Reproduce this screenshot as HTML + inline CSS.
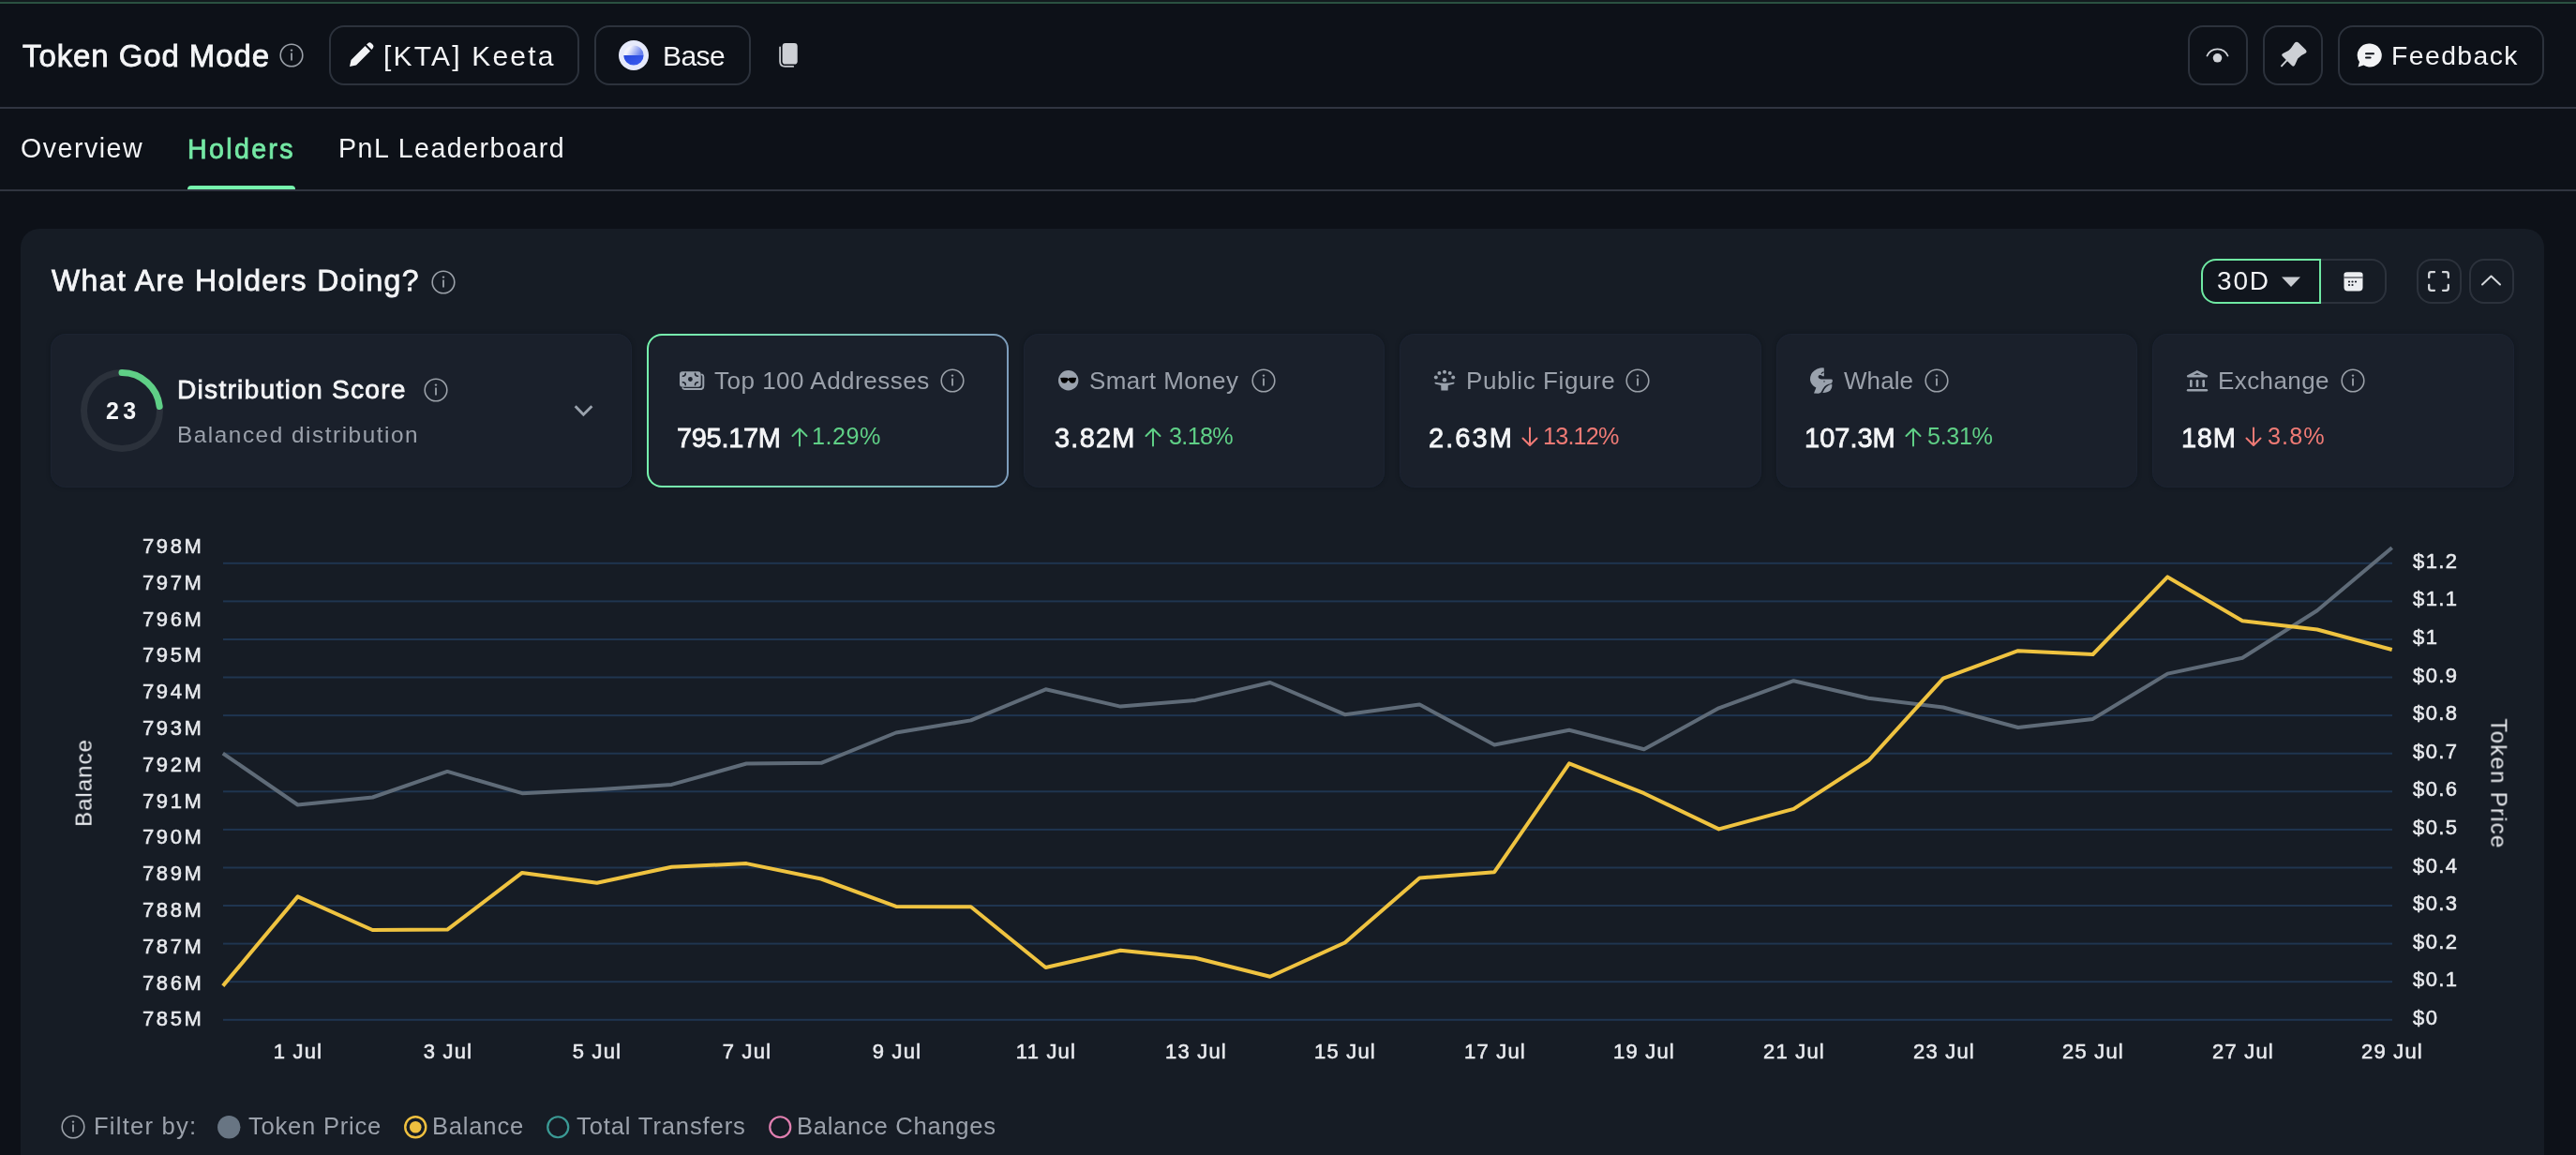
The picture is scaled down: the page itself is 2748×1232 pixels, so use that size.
<!DOCTYPE html>
<html><head><meta charset="utf-8">
<style>
*{margin:0;padding:0;box-sizing:border-box}
html,body{width:2748px;height:1232px;overflow:hidden;background:#0d1118;font-family:"Liberation Sans",sans-serif}
.a{position:absolute}
.tx{position:absolute;white-space:nowrap;will-change:transform;line-height:1.117;font-family:"Liberation Sans",sans-serif}
.btn{position:absolute;border:2px solid #2c323c;border-radius:16px}
.card{position:absolute;top:356px;height:164px;background:#1a202b;border-radius:16px;box-shadow:inset 0 0 0 1px #1c2331,0 0 5px 0 rgba(8,12,18,0.3)}
svg{position:absolute;overflow:visible}
</style></head><body>
<!-- top strip -->
<div class="a" style="left:0;top:0;width:2748px;height:2px;background:#131c1f"></div>
<div class="a" style="left:0;top:2px;width:2748px;height:2px;background:#2a5141"></div>
<!-- header -->
<div class="a" style="left:0;top:114px;width:2748px;height:2px;background:#303540"></div>
<div class="a" style="left:0;top:202px;width:2748px;height:2px;background:#303540"></div>
<div class="a" style="left:200px;top:198px;width:115px;height:4px;background:#76f5ad;border-radius:4px 4px 0 0"></div>
<!-- info icon header -->
<svg style="left:298px;top:46px" width="26" height="26" viewBox="0 0 26 26"><circle cx="13" cy="13" r="11.8" fill="none" stroke="#9aa0a8" stroke-width="1.6"/><rect x="12.1" y="10.5" width="1.8" height="8" fill="#9aa0a8"/><circle cx="13" cy="7.6" r="1.2" fill="#9aa0a8"/></svg>
<div class="btn" style="left:351px;top:27px;width:267px;height:64px"></div>
<!-- pencil -->
<svg style="left:372px;top:45px" width="27" height="27" viewBox="0 0 27 27"><path d="M1 26 L2.5 19 L17.5 4 L23 9.5 L8 24.5 Z M19 2.5 L21 0.8 Q22.5 -0.2 24 1 L26 3 Q27 4.5 26 6 L24.5 8 Z" fill="#f2f3f5"/></svg>
<div class="btn" style="left:634px;top:27px;width:167px;height:64px"></div>
<!-- base logo -->
<svg style="left:660px;top:43px" width="32" height="32" viewBox="0 0 32 32"><defs><linearGradient id="bgq" x1="0" y1="0" x2="1" y2="0.3"><stop offset="0.35" stop-color="#f1f2fb"/><stop offset="1" stop-color="#6a83ee"/></linearGradient><linearGradient id="bgb" x1="0" y1="0" x2="1" y2="1"><stop offset="0" stop-color="#2748da"/><stop offset="1" stop-color="#3d5ef2"/></linearGradient></defs><circle cx="16" cy="16" r="16" fill="#e6eafb"/><path d="M5.4 16 A10.6 10.6 0 0 1 26.6 16 Z" fill="url(#bgq)"/><path d="M5.4 16 A10.6 10.6 0 0 0 26.6 16 Z" fill="url(#bgb)"/></svg>
<!-- copy icon -->
<svg style="left:825px;top:40px" width="35" height="38" viewBox="0 0 35 38"><rect x="9.6" y="6" width="16.1" height="22.6" rx="3.4" fill="#cdd0d5"/><path d="M7.1 10.3 V25.6 Q7.1 30.9 12.4 30.9 H21.2" fill="none" stroke="#c3c6cb" stroke-width="1.8" stroke-linecap="round"/></svg>
<!-- right header buttons -->
<div class="btn" style="left:2334px;top:27px;width:64px;height:64px"></div>
<svg style="left:2353.4px;top:50px" width="25" height="18" viewBox="0 0 25 18"><path d="M1.5 9.5 A12 12 0 0 1 23.5 9.5" fill="none" stroke="#d0d3d8" stroke-width="1.8" stroke-linecap="round"/><circle cx="12.5" cy="11.8" r="4.8" fill="#d0d3d8"/></svg>
<div class="btn" style="left:2414px;top:27px;width:64px;height:64px"></div>
<svg style="left:2425px;top:38px" width="45" height="42" viewBox="0 0 45 42"><path d="M22.5 8.2 Q24.8 5.6 27.2 7.8 L34.6 15 Q36.8 17.4 34 19 Q28.6 21.2 26.2 24.6 L23.3 31 Q21.9 33.9 19.7 31.8 L10.1 22.2 Q7.9 20 10.9 18.7 Q17.2 16.4 19.6 12.6 Z" fill="#cdd0d5"/><path d="M14.8 26.2 L9 32.4" stroke="#cdd0d5" stroke-width="1.9" stroke-linecap="round"/></svg>
<div class="btn" style="left:2494px;top:27px;width:220px;height:64px"></div>
<svg style="left:2515px;top:46px" width="27" height="27" viewBox="0 0 27 27"><path d="M13.5 0.5 A12.5 12.5 0 1 1 6.5 23.5 L0.5 25.5 L2 20 A12.5 12.5 0 0 1 13.5 0.5 Z" fill="#f2f3f5"/><rect x="8" y="10.2" width="10" height="2" rx="1" fill="#0d1118"/><rect x="8" y="14.6" width="6.6" height="2" rx="1" fill="#0d1118"/></svg>

<!-- panel -->
<div class="a" style="left:22px;top:244px;width:2692px;height:1100px;background:#161c25;border-radius:20px"></div>
<svg style="left:460px;top:287.5px" width="26" height="26" viewBox="0 0 26 26"><circle cx="13" cy="13" r="11.8" fill="none" stroke="#9aa0a8" stroke-width="1.6"/><rect x="12.1" y="10.5" width="1.8" height="8" fill="#9aa0a8"/><circle cx="13" cy="7.6" r="1.2" fill="#9aa0a8"/></svg>
<!-- controls -->
<div class="a" style="left:2476px;top:276px;width:70px;height:48px;border:2px solid #2c323c;border-left:none;border-radius:0 16px 16px 0"></div>
<div class="a" style="left:2348px;top:276px;width:128px;height:48px;border:2px solid #6fe9a3;border-radius:16px 0 0 16px;background:#11161e"></div>
<svg style="left:2434px;top:295px" width="20" height="12" viewBox="0 0 20 12"><path d="M0 0.5 L20 0.5 L10 11 Z" fill="#c9ccd1"/></svg>
<svg style="left:2500px;top:290px" width="21" height="21" viewBox="0 0 21 21"><rect x="0.5" y="0.5" width="20" height="20" rx="4" fill="#eceef1"/><rect x="0.5" y="0.5" width="20" height="4.5" rx="2" fill="#eceef1"/><path d="M0.5 6 H20.5" stroke="#161b24" stroke-width="1"/><circle cx="6" cy="10.5" r="1.1" fill="#161b24"/><circle cx="9.5" cy="10.5" r="1.1" fill="#161b24"/><circle cx="13" cy="10.5" r="1.1" fill="#161b24"/><circle cx="6" cy="14" r="1.1" fill="#161b24"/><circle cx="9.5" cy="14" r="1.1" fill="#161b24"/></svg>
<div class="btn" style="left:2578px;top:276px;width:48px;height:48px"></div>
<svg style="left:2590px;top:289px" width="23" height="22" viewBox="0 0 23 22"><path d="M1.2 7 V3.5 Q1.2 1.2 3.5 1.2 H7 M16 1.2 H19.5 Q21.8 1.2 21.8 3.5 V7 M21.8 15 V18.5 Q21.8 20.8 19.5 20.8 H16 M7 20.8 H3.5 Q1.2 20.8 1.2 18.5 V15" fill="none" stroke="#d5d8dc" stroke-width="2.3" stroke-linecap="round"/></svg>
<div class="btn" style="left:2634px;top:276px;width:48px;height:48px"></div>
<svg style="left:2647px;top:293px" width="21" height="12" viewBox="0 0 21 12"><path d="M1 10.5 L10.5 1.5 L20 10.5" fill="none" stroke="#d5d8dc" stroke-width="2" stroke-linecap="round" stroke-linejoin="round"/></svg>

<!-- cards -->
<div class="card" style="left:54px;width:620px"></div>
<svg style="left:86px;top:394px" width="88" height="88" viewBox="0 0 88 88"><circle cx="44" cy="44" r="40.5" fill="none" stroke="#2b313b" stroke-width="7"/><path d="M44 3.5 A40.5 40.5 0 0 1 84.2 39.5" fill="none" stroke="#5fcf86" stroke-width="7" stroke-linecap="round"/></svg>
<svg style="left:452px;top:403px" width="26" height="26" viewBox="0 0 26 26"><circle cx="13" cy="13" r="11.8" fill="none" stroke="#9aa0a8" stroke-width="1.6"/><rect x="12.1" y="10.5" width="1.8" height="8" fill="#9aa0a8"/><circle cx="13" cy="7.6" r="1.2" fill="#9aa0a8"/></svg>
<svg style="left:611.5px;top:432px" width="21" height="14" viewBox="0 0 21 14"><path d="M1.7 1.3 L10.4 10.2 L19.4 1.3" fill="none" stroke="#9aa2ad" stroke-width="2.9" stroke-linecap="butt" stroke-linejoin="miter"/></svg>

<div class="card" style="left:690px;width:386px;box-shadow:none;background:linear-gradient(90deg,#76f5ad,#7d9cbb);"></div>
<div class="card" style="left:692px;top:358px;width:382px;height:160px;background:#1a202b;border-radius:14px;box-shadow:none"></div>
<div class="card" style="left:1092px;width:385px"></div>
<div class="card" style="left:1493px;width:386px"></div>
<div class="card" style="left:1895px;width:385px"></div>
<div class="card" style="left:2296px;width:386px"></div>

<!-- card info icons -->
<svg style="left:1003px;top:393px" width="26" height="26" viewBox="0 0 26 26"><circle cx="13" cy="13" r="11.8" fill="none" stroke="#9aa0a8" stroke-width="1.6"/><rect x="12.1" y="10.5" width="1.8" height="8" fill="#9aa0a8"/><circle cx="13" cy="7.6" r="1.2" fill="#9aa0a8"/></svg>
<svg style="left:1335px;top:393px" width="26" height="26" viewBox="0 0 26 26"><circle cx="13" cy="13" r="11.8" fill="none" stroke="#9aa0a8" stroke-width="1.6"/><rect x="12.1" y="10.5" width="1.8" height="8" fill="#9aa0a8"/><circle cx="13" cy="7.6" r="1.2" fill="#9aa0a8"/></svg>
<svg style="left:1734px;top:393px" width="26" height="26" viewBox="0 0 26 26"><circle cx="13" cy="13" r="11.8" fill="none" stroke="#9aa0a8" stroke-width="1.6"/><rect x="12.1" y="10.5" width="1.8" height="8" fill="#9aa0a8"/><circle cx="13" cy="7.6" r="1.2" fill="#9aa0a8"/></svg>
<svg style="left:2053px;top:393px" width="26" height="26" viewBox="0 0 26 26"><circle cx="13" cy="13" r="11.8" fill="none" stroke="#9aa0a8" stroke-width="1.6"/><rect x="12.1" y="10.5" width="1.8" height="8" fill="#9aa0a8"/><circle cx="13" cy="7.6" r="1.2" fill="#9aa0a8"/></svg>
<svg style="left:2497px;top:393px" width="26" height="26" viewBox="0 0 26 26"><circle cx="13" cy="13" r="11.8" fill="none" stroke="#9aa0a8" stroke-width="1.6"/><rect x="12.1" y="10.5" width="1.8" height="8" fill="#9aa0a8"/><circle cx="13" cy="7.6" r="1.2" fill="#9aa0a8"/></svg>
<!-- money icon -->
<svg style="left:724px;top:395px" width="28" height="22" viewBox="0 0 28 22"><path d="M25 4.6 Q26.3 5.2 26.3 7 V16.4 Q26.3 20.1 22.6 20.1 H6.3 Q5 20.1 4.4 19.1" fill="none" stroke="#9aa2ad" stroke-width="2" stroke-linecap="round"/><rect x="1" y="1.3" width="22.7" height="16.4" rx="3" fill="#9aa2ad"/><circle cx="12.4" cy="9.5" r="2.4" fill="#191f2a"/><path d="M4.3 6.3 Q7.3 6.3 7.3 3.3 M17.5 3.3 Q17.5 6.3 20.5 6.3 M4.3 12.7 Q7.3 12.7 7.3 15.7 M17.5 15.7 Q17.5 12.7 20.5 12.7" fill="none" stroke="#191f2a" stroke-width="1.5" stroke-linecap="round"/></svg>
<!-- sunglasses face -->
<svg style="left:1129px;top:395px" width="22" height="22" viewBox="0 0 22 22"><circle cx="10.7" cy="10.8" r="10.7" fill="#9aa2ad"/><path d="M2.2 8 Q6.2 7.3 9.8 8.1 L10.7 9.3 L11.6 8.1 Q15.2 7.3 19.2 8 L18.4 11.5 Q17.6 13.7 15 13.8 Q12.6 13.8 11.5 11.2 L10.7 10.5 L9.9 11.2 Q8.8 13.8 6.4 13.8 Q3.8 13.7 3 11.5 Z" fill="#000"/></svg>
<!-- public figure -->
<svg style="left:1529px;top:394px" width="24" height="24" viewBox="0 0 24 24"><g fill="#9aa2ad"><circle cx="2.8" cy="8.5" r="2"/><circle cx="6.4" cy="4" r="2"/><circle cx="12" cy="2.8" r="2"/><circle cx="17.7" cy="4" r="2"/><circle cx="21.2" cy="8.5" r="2"/><circle cx="12" cy="11.3" r="2.3"/><path d="M1.5 14.5 Q1.5 13.6 2.5 13.8 Q7 14.8 12 14.8 Q17 14.8 21.5 13.8 Q22.5 13.6 22.5 14.5 Q22.5 15.4 21.2 15.8 L15.8 17 L15.6 22.6 H8.4 L8.2 17 L2.8 15.8 Q1.5 15.4 1.5 14.5 Z"/></g></svg>
<!-- whale -->
<svg style="left:1930px;top:392px" width="26" height="28" viewBox="0 0 26 28"><path d="M11.6 0.4 Q15.2 0 15.8 0.6 L15.9 8.6 Q15.9 9.8 14.6 9.2 L12 8 Q10 7.6 9.6 9.6 Q9.6 12.2 12.6 12.4 L23.6 12.4 Q25.2 12.6 24.9 14.2 Q24.6 16.8 23.2 17.2 Q17.8 17.4 14.8 22.6 L12.6 26.6 Q11.5 27.8 9.5 27.7 L5 27.6 L7.4 21.4 Q1.8 18.6 1 13.2 Q0.6 6.6 5.6 3.2 Q8.4 1.2 11.6 0.4 Z" fill="#9aa2ad"/><path d="M14.3 26.9 Q17.3 19.5 24.2 17.6 Q24.9 21.6 22.5 24.2 Q19.7 27 14.3 26.9 Z" fill="#9aa2ad"/><path d="M12.9 6.7 Q13.8 5.3 15.6 4.9" fill="none" stroke="#191f2a" stroke-width="1.1"/><rect x="15.4" y="14.3" width="1.2" height="1.2" fill="#191f2a"/></svg>
<!-- bank -->
<svg style="left:2332px;top:394px" width="24" height="24" viewBox="0 0 24 24"><g fill="#9aa2ad"><path d="M11.9 1 L23 6.6 Q23.6 8.3 22.2 8.5 H1.8 Q0.4 8.3 1 6.6 Z"/><rect x="4" y="11" width="2.6" height="8" rx="1.2"/><rect x="10.7" y="11" width="2.6" height="8" rx="1.2"/><rect x="17.4" y="11" width="2.6" height="8" rx="1.2"/><rect x="0.8" y="21" width="22.4" height="2.4" rx="1.2"/></g><path d="M8 5.8 L11.9 3.9 L15.8 5.8 Z" fill="#191f2a"/></svg>
<!-- arrows -->
<svg style="left:844px;top:456px" width="18" height="22" viewBox="0 0 18 22"><path d="M9 19.5 V2 M1.5 9 L9 1.5 L16.5 9" fill="none" stroke="#5fcf86" stroke-width="2" stroke-linecap="round" stroke-linejoin="round"/></svg>
<svg style="left:1221px;top:456px" width="18" height="22" viewBox="0 0 18 22"><path d="M9 19.5 V2 M1.5 9 L9 1.5 L16.5 9" fill="none" stroke="#5fcf86" stroke-width="2" stroke-linecap="round" stroke-linejoin="round"/></svg>
<svg style="left:1622.5px;top:456px" width="18" height="22" viewBox="0 0 18 22"><path d="M9 0.5 V18.5 M1.5 11.5 L9 19 L16.5 11.5" fill="none" stroke="#ef7a75" stroke-width="2" stroke-linecap="round" stroke-linejoin="round"/></svg>
<svg style="left:2031.5px;top:456px" width="18" height="22" viewBox="0 0 18 22"><path d="M9 19.5 V2 M1.5 9 L9 1.5 L16.5 9" fill="none" stroke="#5fcf86" stroke-width="2" stroke-linecap="round" stroke-linejoin="round"/></svg>
<svg style="left:2394.5px;top:456px" width="18" height="22" viewBox="0 0 18 22"><path d="M9 0.5 V18.5 M1.5 11.5 L9 19 L16.5 11.5" fill="none" stroke="#ef7a75" stroke-width="2" stroke-linecap="round" stroke-linejoin="round"/></svg>


<!-- chart -->
<svg style="left:0;top:0" width="2748" height="1232" viewBox="0 0 2748 1232">
<rect x="238" y="599.8" width="2314" height="2" fill="#1f3550"/><rect x="238" y="640.4" width="2314" height="2" fill="#1f3550"/><rect x="238" y="681.0" width="2314" height="2" fill="#1f3550"/><rect x="238" y="721.5" width="2314" height="2" fill="#1f3550"/><rect x="238" y="762.1" width="2314" height="2" fill="#1f3550"/><rect x="238" y="802.7" width="2314" height="2" fill="#1f3550"/><rect x="238" y="843.3" width="2314" height="2" fill="#1f3550"/><rect x="238" y="883.9" width="2314" height="2" fill="#1f3550"/><rect x="238" y="924.5" width="2314" height="2" fill="#1f3550"/><rect x="238" y="965.0" width="2314" height="2" fill="#1f3550"/><rect x="238" y="1005.6" width="2314" height="2" fill="#1f3550"/><rect x="238" y="1046.2" width="2314" height="2" fill="#1f3550"/><rect x="238" y="1086.8" width="2314" height="2" fill="#1f3550"/>
<polyline points="237.8,803.6 317.6,858.5 397.4,850.5 477.2,822.9 557.0,846.2 636.8,842.2 716.5,836.9 796.3,814.5 876.1,813.8 955.9,781.5 1035.7,768.4 1115.5,735.3 1195.3,753.6 1275.1,746.9 1354.9,728.0 1434.7,762.2 1514.4,751.6 1594.2,794.5 1674.0,778.7 1753.8,799.3 1833.6,755.3 1913.4,726.2 1993.2,744.7 2073.0,754.5 2152.8,776.0 2232.6,766.9 2312.3,718.6 2392.1,701.8 2471.9,651.3 2551.7,584.3" fill="none" stroke="#5f6b78" stroke-width="4" stroke-linejoin="round"/>
<polyline points="237.8,1051.6 317.6,956.4 397.4,992.0 477.2,991.6 557.0,930.9 636.8,941.8 716.5,924.7 796.3,921.1 876.1,937.5 955.9,966.9 1035.7,967.3 1115.5,1032.0 1195.3,1013.8 1275.1,1021.8 1354.9,1041.8 1434.7,1005.5 1514.4,936.4 1594.2,930.2 1674.0,814.3 1753.8,846.2 1833.6,884.4 1913.4,862.9 1993.2,811.3 2073.0,723.6 2152.8,694.2 2232.6,698.0 2312.3,615.4 2392.1,662.2 2471.9,671.5 2551.7,693.0" fill="none" stroke="#efc340" stroke-width="4" stroke-linejoin="round"/>
</svg>
<div class="tx" style="left:89.5px;top:835.1px;font-size:24px;letter-spacing:1px;color:#e8eaee;transform:translate(-50%,-50%) rotate(-90deg)">Balance</div>
<div class="tx" style="left:2665px;top:836px;font-size:24px;letter-spacing:1.25px;color:#e8eaee;transform:translate(-50%,-50%) rotate(90deg)">Token Price</div>

<!-- legend -->
<svg style="left:65px;top:1189px" width="26" height="26" viewBox="0 0 26 26"><circle cx="13" cy="13" r="11.8" fill="none" stroke="#9aa0a8" stroke-width="1.6"/><rect x="12.1" y="10.5" width="1.8" height="8" fill="#9aa0a8"/><circle cx="13" cy="7.6" r="1.2" fill="#9aa0a8"/></svg>
<svg style="left:232px;top:1190px" width="25" height="25" viewBox="0 0 25 25"><circle cx="12.25" cy="12.25" r="12.2" fill="#687583"/></svg>
<svg style="left:431px;top:1190px" width="25" height="25" viewBox="0 0 25 25"><circle cx="12.25" cy="12.25" r="11" fill="none" stroke="#efc03f" stroke-width="2.4"/><circle cx="12.25" cy="12.25" r="6.3" fill="#efc03f"/></svg>
<svg style="left:583px;top:1190px" width="25" height="25" viewBox="0 0 25 25"><circle cx="12.25" cy="12.25" r="11" fill="none" stroke="#3b9a95" stroke-width="2.2"/></svg>
<svg style="left:820px;top:1190px" width="25" height="25" viewBox="0 0 25 25"><circle cx="12.25" cy="12.25" r="11" fill="none" stroke="#e07fb0" stroke-width="2.2"/></svg>

<div class="tx" id="t_title" style="top:41.84px;font-size:33.00px;font-weight:400;color:#f4f5f7;letter-spacing:0.909px;-webkit-text-stroke:0.80px #f4f5f7;left:23.60px;">Token God Mode</div>
<div class="tx" id="t_kta" style="top:42.75px;font-size:30.00px;font-weight:400;color:#f4f5f7;letter-spacing:2.190px;left:409.00px;">[KTA] Keeta</div>
<div class="tx" id="t_base" style="top:42.75px;font-size:30.00px;font-weight:400;color:#f4f5f7;letter-spacing:-0.599px;left:707.20px;">Base</div>
<div class="tx" id="t_feedback" style="top:43.79px;font-size:28.30px;font-weight:400;color:#f4f5f7;letter-spacing:1.459px;left:2551.40px;">Feedback</div>
<div class="tx" id="t_overview" style="top:143.22px;font-size:28.60px;font-weight:400;color:#f4f5f7;letter-spacing:1.500px;left:21.80px;">Overview</div>
<div class="tx" id="t_holders" style="top:143.72px;font-size:28.60px;font-weight:400;color:#74e8a4;letter-spacing:2.333px;-webkit-text-stroke:0.80px #74e8a4;left:199.60px;">Holders</div>
<div class="tx" id="t_pnl" style="top:143.42px;font-size:28.60px;font-weight:400;color:#f4f5f7;letter-spacing:1.478px;left:360.60px;">PnL Leaderboard</div>
<div class="tx" id="t_panel" style="top:282.44px;font-size:32.00px;font-weight:400;color:#f4f5f7;letter-spacing:1.386px;-webkit-text-stroke:0.80px #f4f5f7;left:55.00px;">What Are Holders Doing?</div>
<div class="tx" id="t_30d" style="top:283.86px;font-size:28.00px;font-weight:400;color:#f4f5f7;letter-spacing:1.850px;left:2364.60px;">30D</div>
<div class="tx" id="t_23" style="top:424.68px;font-size:25.00px;font-weight:700;color:#f4f5f7;letter-spacing:4.400px;left:113.20px;">23</div>
<div class="tx" id="t_ds" style="top:400.48px;font-size:28.20px;font-weight:400;color:#f4f5f7;letter-spacing:1.236px;-webkit-text-stroke:0.80px #f4f5f7;left:189.00px;">Distribution Score</div>
<div class="tx" id="t_bd" style="top:449.81px;font-size:24.30px;font-weight:400;color:#9ba1ab;letter-spacing:1.550px;left:189.00px;">Balanced distribution</div>
<div class="tx" id="t_c1" style="top:392.07px;font-size:26.00px;font-weight:400;color:#9ba1ab;letter-spacing:0.500px;left:762.20px;">Top 100 Addresses</div>
<div class="tx" id="t_c2" style="top:392.07px;font-size:26.00px;font-weight:400;color:#9ba1ab;letter-spacing:0.430px;left:1162.00px;">Smart Money</div>
<div class="tx" id="t_c3" style="top:392.07px;font-size:26.00px;font-weight:400;color:#9ba1ab;letter-spacing:0.583px;left:1564.00px;">Public Figure</div>
<div class="tx" id="t_c4" style="top:392.07px;font-size:26.00px;font-weight:400;color:#9ba1ab;letter-spacing:0.075px;left:1967.40px;">Whale</div>
<div class="tx" id="t_c5" style="top:392.07px;font-size:26.00px;font-weight:400;color:#9ba1ab;letter-spacing:0.414px;left:2366.00px;">Exchange</div>
<div class="tx" id="t_v1" style="top:450.56px;font-size:29.00px;font-weight:400;color:#f4f5f7;letter-spacing:-0.317px;-webkit-text-stroke:0.80px #f4f5f7;left:722.00px;">795.17M</div>
<div class="tx" id="t_v2" style="top:450.56px;font-size:29.00px;font-weight:400;color:#f4f5f7;letter-spacing:1.225px;-webkit-text-stroke:0.80px #f4f5f7;left:1124.60px;">3.82M</div>
<div class="tx" id="t_v3" style="top:450.56px;font-size:29.00px;font-weight:400;color:#f4f5f7;letter-spacing:2.050px;-webkit-text-stroke:0.80px #f4f5f7;left:1524.40px;">2.63M</div>
<div class="tx" id="t_v4" style="top:450.56px;font-size:29.00px;font-weight:400;color:#f4f5f7;letter-spacing:0.000px;-webkit-text-stroke:0.80px #f4f5f7;left:1925.00px;">107.3M</div>
<div class="tx" id="t_v5" style="top:450.56px;font-size:29.00px;font-weight:400;color:#f4f5f7;letter-spacing:0.700px;-webkit-text-stroke:0.80px #f4f5f7;left:2327.00px;">18M</div>
<div class="tx" id="t_p1" style="top:451.49px;font-size:25.20px;font-weight:400;color:#5fcf86;letter-spacing:0.475px;left:866.40px;">1.29%</div>
<div class="tx" id="t_p2" style="top:451.49px;font-size:25.20px;font-weight:400;color:#5fcf86;letter-spacing:-0.675px;left:1246.80px;">3.18%</div>
<div class="tx" id="t_p3" style="top:451.49px;font-size:25.20px;font-weight:400;color:#ef7a75;letter-spacing:-0.820px;left:1646.20px;">13.12%</div>
<div class="tx" id="t_p4" style="top:451.49px;font-size:25.20px;font-weight:400;color:#5fcf86;letter-spacing:-0.375px;left:2056.40px;">5.31%</div>
<div class="tx" id="t_p5" style="top:451.49px;font-size:25.20px;font-weight:400;color:#ef7a75;letter-spacing:1.100px;left:2419.20px;">3.8%</div>
<div class="tx" id="t_lg0" style="top:1187.03px;font-size:25.60px;font-weight:400;color:#9ba1ab;letter-spacing:1.222px;left:100.00px;">Filter by:</div>
<div class="tx" id="t_lg1" style="top:1187.03px;font-size:25.60px;font-weight:400;color:#9ba1ab;letter-spacing:0.750px;left:265.00px;">Token Price</div>
<div class="tx" id="t_lg2" style="top:1187.03px;font-size:25.60px;font-weight:400;color:#9ba1ab;letter-spacing:0.784px;left:461.20px;">Balance</div>
<div class="tx" id="t_lg3" style="top:1187.03px;font-size:25.60px;font-weight:400;color:#9ba1ab;letter-spacing:0.857px;left:615.40px;">Total Transfers</div>
<div class="tx" id="t_lg4" style="top:1187.03px;font-size:25.60px;font-weight:400;color:#9ba1ab;letter-spacing:0.708px;left:850.40px;">Balance Changes</div>
<div class="tx" id="t_yl0" style="top:570.99px;font-size:22.00px;font-weight:400;color:#e8eaee;letter-spacing:2.600px;-webkit-text-stroke:0.55px #e8eaee;right:2530.40px;text-align:right;">798M</div>
<div class="tx" id="t_yl1" style="top:609.79px;font-size:22.00px;font-weight:400;color:#e8eaee;letter-spacing:2.600px;-webkit-text-stroke:0.55px #e8eaee;right:2530.40px;text-align:right;">797M</div>
<div class="tx" id="t_yl2" style="top:648.59px;font-size:22.00px;font-weight:400;color:#e8eaee;letter-spacing:2.600px;-webkit-text-stroke:0.55px #e8eaee;right:2530.40px;text-align:right;">796M</div>
<div class="tx" id="t_yl3" style="top:687.39px;font-size:22.00px;font-weight:400;color:#e8eaee;letter-spacing:2.600px;-webkit-text-stroke:0.55px #e8eaee;right:2530.40px;text-align:right;">795M</div>
<div class="tx" id="t_yl4" style="top:726.19px;font-size:22.00px;font-weight:400;color:#e8eaee;letter-spacing:2.600px;-webkit-text-stroke:0.55px #e8eaee;right:2530.40px;text-align:right;">794M</div>
<div class="tx" id="t_yl5" style="top:764.99px;font-size:22.00px;font-weight:400;color:#e8eaee;letter-spacing:2.600px;-webkit-text-stroke:0.55px #e8eaee;right:2530.40px;text-align:right;">793M</div>
<div class="tx" id="t_yl6" style="top:803.79px;font-size:22.00px;font-weight:400;color:#e8eaee;letter-spacing:2.600px;-webkit-text-stroke:0.55px #e8eaee;right:2530.40px;text-align:right;">792M</div>
<div class="tx" id="t_yl7" style="top:842.59px;font-size:22.00px;font-weight:400;color:#e8eaee;letter-spacing:2.600px;-webkit-text-stroke:0.55px #e8eaee;right:2530.40px;text-align:right;">791M</div>
<div class="tx" id="t_yl8" style="top:881.39px;font-size:22.00px;font-weight:400;color:#e8eaee;letter-spacing:2.600px;-webkit-text-stroke:0.55px #e8eaee;right:2530.40px;text-align:right;">790M</div>
<div class="tx" id="t_yl9" style="top:920.19px;font-size:22.00px;font-weight:400;color:#e8eaee;letter-spacing:2.600px;-webkit-text-stroke:0.55px #e8eaee;right:2530.40px;text-align:right;">789M</div>
<div class="tx" id="t_yl10" style="top:958.99px;font-size:22.00px;font-weight:400;color:#e8eaee;letter-spacing:2.600px;-webkit-text-stroke:0.55px #e8eaee;right:2530.40px;text-align:right;">788M</div>
<div class="tx" id="t_yl11" style="top:997.79px;font-size:22.00px;font-weight:400;color:#e8eaee;letter-spacing:2.600px;-webkit-text-stroke:0.55px #e8eaee;right:2530.40px;text-align:right;">787M</div>
<div class="tx" id="t_yl12" style="top:1036.59px;font-size:22.00px;font-weight:400;color:#e8eaee;letter-spacing:2.600px;-webkit-text-stroke:0.55px #e8eaee;right:2530.40px;text-align:right;">786M</div>
<div class="tx" id="t_yl13" style="top:1075.39px;font-size:22.00px;font-weight:400;color:#e8eaee;letter-spacing:2.600px;-webkit-text-stroke:0.55px #e8eaee;right:2530.40px;text-align:right;">785M</div>
<div class="tx" id="t_yr0" style="top:586.89px;font-size:22.00px;font-weight:400;color:#e8eaee;letter-spacing:1.400px;-webkit-text-stroke:0.55px #e8eaee;left:2574.00px;">$1.2</div>
<div class="tx" id="t_yr1" style="top:627.47px;font-size:22.00px;font-weight:400;color:#e8eaee;letter-spacing:1.400px;-webkit-text-stroke:0.55px #e8eaee;left:2574.00px;">$1.1</div>
<div class="tx" id="t_yr2" style="top:668.06px;font-size:22.00px;font-weight:400;color:#e8eaee;letter-spacing:1.400px;-webkit-text-stroke:0.55px #e8eaee;left:2574.00px;">$1</div>
<div class="tx" id="t_yr3" style="top:708.64px;font-size:22.00px;font-weight:400;color:#e8eaee;letter-spacing:1.400px;-webkit-text-stroke:0.55px #e8eaee;left:2574.00px;">$0.9</div>
<div class="tx" id="t_yr4" style="top:749.22px;font-size:22.00px;font-weight:400;color:#e8eaee;letter-spacing:1.400px;-webkit-text-stroke:0.55px #e8eaee;left:2574.00px;">$0.8</div>
<div class="tx" id="t_yr5" style="top:789.81px;font-size:22.00px;font-weight:400;color:#e8eaee;letter-spacing:1.400px;-webkit-text-stroke:0.55px #e8eaee;left:2574.00px;">$0.7</div>
<div class="tx" id="t_yr6" style="top:830.39px;font-size:22.00px;font-weight:400;color:#e8eaee;letter-spacing:1.400px;-webkit-text-stroke:0.55px #e8eaee;left:2574.00px;">$0.6</div>
<div class="tx" id="t_yr7" style="top:870.97px;font-size:22.00px;font-weight:400;color:#e8eaee;letter-spacing:1.400px;-webkit-text-stroke:0.55px #e8eaee;left:2574.00px;">$0.5</div>
<div class="tx" id="t_yr8" style="top:911.56px;font-size:22.00px;font-weight:400;color:#e8eaee;letter-spacing:1.400px;-webkit-text-stroke:0.55px #e8eaee;left:2574.00px;">$0.4</div>
<div class="tx" id="t_yr9" style="top:952.14px;font-size:22.00px;font-weight:400;color:#e8eaee;letter-spacing:1.400px;-webkit-text-stroke:0.55px #e8eaee;left:2574.00px;">$0.3</div>
<div class="tx" id="t_yr10" style="top:992.72px;font-size:22.00px;font-weight:400;color:#e8eaee;letter-spacing:1.400px;-webkit-text-stroke:0.55px #e8eaee;left:2574.00px;">$0.2</div>
<div class="tx" id="t_yr11" style="top:1033.31px;font-size:22.00px;font-weight:400;color:#e8eaee;letter-spacing:1.400px;-webkit-text-stroke:0.55px #e8eaee;left:2574.00px;">$0.1</div>
<div class="tx" id="t_yr12" style="top:1073.89px;font-size:22.00px;font-weight:400;color:#e8eaee;letter-spacing:1.400px;-webkit-text-stroke:0.55px #e8eaee;left:2574.00px;">$0</div>
<div class="tx" id="t_x1" style="top:1110.09px;font-size:22.00px;font-weight:400;color:#e8eaee;letter-spacing:1.200px;-webkit-text-stroke:0.55px #e8eaee;left:318.19px;transform:translateX(-50%);">1 Jul</div>
<div class="tx" id="t_x3" style="top:1110.09px;font-size:22.00px;font-weight:400;color:#e8eaee;letter-spacing:1.200px;-webkit-text-stroke:0.55px #e8eaee;left:477.77px;transform:translateX(-50%);">3 Jul</div>
<div class="tx" id="t_x5" style="top:1110.09px;font-size:22.00px;font-weight:400;color:#e8eaee;letter-spacing:1.200px;-webkit-text-stroke:0.55px #e8eaee;left:637.35px;transform:translateX(-50%);">5 Jul</div>
<div class="tx" id="t_x7" style="top:1110.09px;font-size:22.00px;font-weight:400;color:#e8eaee;letter-spacing:1.200px;-webkit-text-stroke:0.55px #e8eaee;left:796.93px;transform:translateX(-50%);">7 Jul</div>
<div class="tx" id="t_x9" style="top:1110.09px;font-size:22.00px;font-weight:400;color:#e8eaee;letter-spacing:1.200px;-webkit-text-stroke:0.55px #e8eaee;left:956.51px;transform:translateX(-50%);">9 Jul</div>
<div class="tx" id="t_x11" style="top:1110.09px;font-size:22.00px;font-weight:400;color:#e8eaee;letter-spacing:1.200px;-webkit-text-stroke:0.55px #e8eaee;left:1116.09px;transform:translateX(-50%);">11 Jul</div>
<div class="tx" id="t_x13" style="top:1110.09px;font-size:22.00px;font-weight:400;color:#e8eaee;letter-spacing:1.200px;-webkit-text-stroke:0.55px #e8eaee;left:1275.67px;transform:translateX(-50%);">13 Jul</div>
<div class="tx" id="t_x15" style="top:1110.09px;font-size:22.00px;font-weight:400;color:#e8eaee;letter-spacing:1.200px;-webkit-text-stroke:0.55px #e8eaee;left:1435.25px;transform:translateX(-50%);">15 Jul</div>
<div class="tx" id="t_x17" style="top:1110.09px;font-size:22.00px;font-weight:400;color:#e8eaee;letter-spacing:1.200px;-webkit-text-stroke:0.55px #e8eaee;left:1594.83px;transform:translateX(-50%);">17 Jul</div>
<div class="tx" id="t_x19" style="top:1110.09px;font-size:22.00px;font-weight:400;color:#e8eaee;letter-spacing:1.200px;-webkit-text-stroke:0.55px #e8eaee;left:1754.41px;transform:translateX(-50%);">19 Jul</div>
<div class="tx" id="t_x21" style="top:1110.09px;font-size:22.00px;font-weight:400;color:#e8eaee;letter-spacing:1.200px;-webkit-text-stroke:0.55px #e8eaee;left:1913.99px;transform:translateX(-50%);">21 Jul</div>
<div class="tx" id="t_x23" style="top:1110.09px;font-size:22.00px;font-weight:400;color:#e8eaee;letter-spacing:1.200px;-webkit-text-stroke:0.55px #e8eaee;left:2073.57px;transform:translateX(-50%);">23 Jul</div>
<div class="tx" id="t_x25" style="top:1110.09px;font-size:22.00px;font-weight:400;color:#e8eaee;letter-spacing:1.200px;-webkit-text-stroke:0.55px #e8eaee;left:2233.15px;transform:translateX(-50%);">25 Jul</div>
<div class="tx" id="t_x27" style="top:1110.09px;font-size:22.00px;font-weight:400;color:#e8eaee;letter-spacing:1.200px;-webkit-text-stroke:0.55px #e8eaee;left:2392.73px;transform:translateX(-50%);">27 Jul</div>
<div class="tx" id="t_x29" style="top:1110.09px;font-size:22.00px;font-weight:400;color:#e8eaee;letter-spacing:1.200px;-webkit-text-stroke:0.55px #e8eaee;left:2552.31px;transform:translateX(-50%);">29 Jul</div>
</body></html>
